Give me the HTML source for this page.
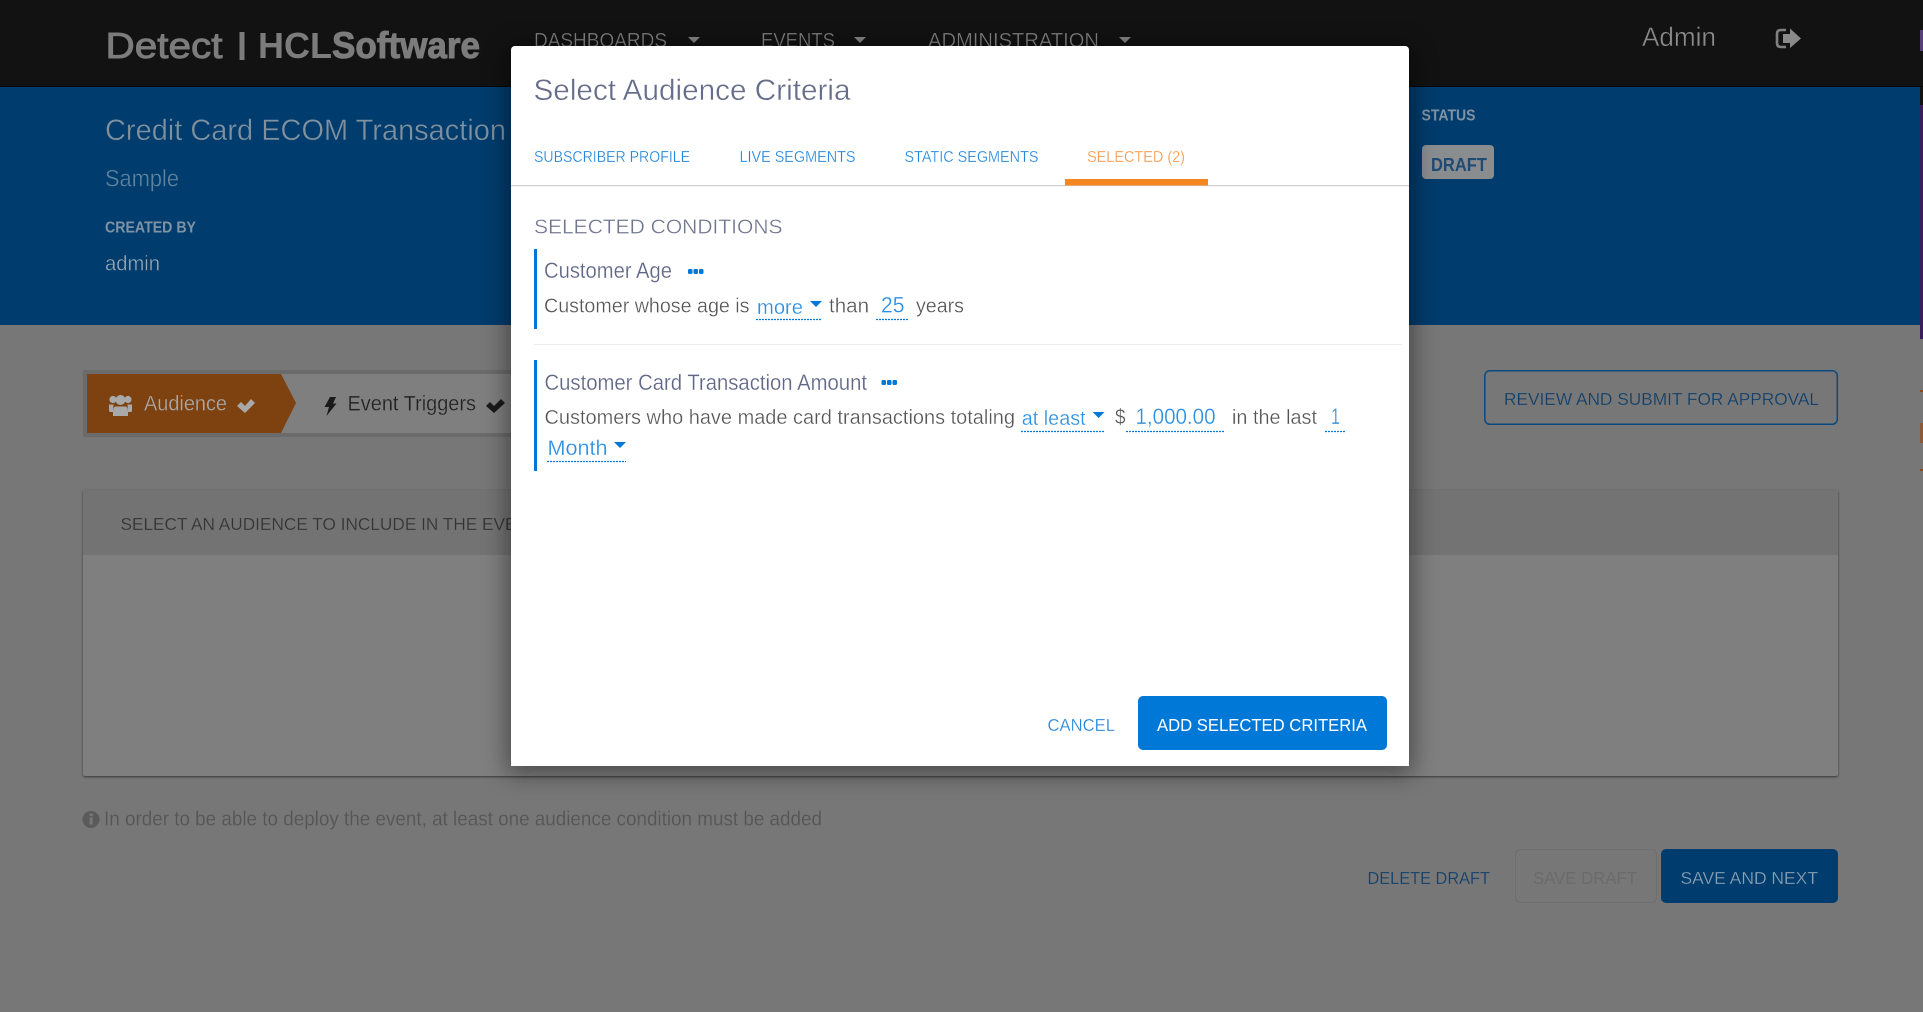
<!DOCTYPE html>
<html lang="en">
<head>
<meta charset="utf-8">
<title>Select Audience Criteria</title>
<style>
html,body{margin:0;padding:0;width:1923px;height:1012px;overflow:hidden;background:#777;font-family:"Liberation Sans",sans-serif}
.a{position:absolute}
svg{position:absolute;left:0;top:0;display:block;overflow:hidden}
svg text{font-family:"Liberation Sans",sans-serif}
#modal{left:511px;top:46px;width:898px;height:720px;background:#fff;border-radius:4px 4px 0 0;box-shadow:0 4px 24px 4px rgba(0,0,0,.42);overflow:hidden}
</style>
</head>
<body>
<div class="a" style="left:0;top:0;width:1923px;height:86px;background:#121212"></div>
<div class="a" style="left:0;top:86px;width:1923px;height:1px;background:#070707"></div>
<div class="a" style="left:0;top:87px;width:1920px;height:238px;background:#003c6d"></div>
<div class="a" style="left:83px;top:490px;width:1755px;height:286px;background:#7f7f7f;border-radius:2px;box-shadow:0 1px 2px rgba(0,0,0,.55)"></div>
<div class="a" style="left:83px;top:490px;width:1755px;height:65px;background:#737373;border-radius:2px 2px 0 0"></div>
<div class="a" style="left:83px;top:370px;width:440px;height:67px;background:#6b6b6b"></div>
<div class="a" style="left:87px;top:374px;width:430px;height:59px;background:#7f7f7f"></div>
<div class="a" style="left:1920px;top:87px;width:3px;height:18px;background:#121212"></div>
<div class="a" style="left:1920px;top:105px;width:3px;height:234px;background:#3a1e5c"></div>
<div class="a" style="left:1920px;top:30px;width:3px;height:21px;background:#57407a"></div>
<div class="a" style="left:1920px;top:390px;width:3px;height:2px;background:#8a4a20"></div>
<div class="a" style="left:1920px;top:423px;width:3px;height:20px;background:#8a5a3a"></div>
<div class="a" style="left:1920px;top:469px;width:3px;height:2px;background:#8a4a20"></div>

<svg width="1923" height="1012" viewBox="0 0 1923 1012">
  <!-- nav -->
  <g fill="#7c7c7c">
    <text x="105.5" y="58" font-size="36" stroke="#7c7c7c" stroke-width=".9" textLength="117" lengthAdjust="spacingAndGlyphs">Detect</text>
    <rect x="239.5" y="32" width="5" height="28"/>
    <text x="258" y="58" font-size="36" font-weight="700" textLength="74" lengthAdjust="spacingAndGlyphs">HCL</text>
    <text x="332" y="58" font-size="37" font-weight="700" stroke="#7c7c7c" stroke-width="1" textLength="148" lengthAdjust="spacingAndGlyphs">Software</text>
  </g>
  <g fill="#858585" font-size="20.5" stroke="#121212" stroke-width=".35">
    <text x="534" y="47" textLength="133" lengthAdjust="spacingAndGlyphs">DASHBOARDS</text>
    <polygon points="688,37 700,37 694,43" stroke="none"/>
    <text x="761" y="47" textLength="74" lengthAdjust="spacingAndGlyphs">EVENTS</text>
    <polygon points="854,37 866,37 860,43" stroke="none"/>
    <text x="928" y="47" textLength="171" lengthAdjust="spacingAndGlyphs">ADMINISTRATION</text>
    <polygon points="1119,37 1131,37 1125,43" stroke="none"/>
  </g>
  <text x="1642" y="46" font-size="27" fill="#8a8a8a" stroke="#121212" stroke-width=".4" textLength="74" lengthAdjust="spacingAndGlyphs">Admin</text>
  <path d="M1786 30H1781Q1777 30 1777 34V43Q1777 47 1781 47H1786" fill="none" stroke="#808080" stroke-width="2.6"/>
  <path d="M1783 34H1790V28.5L1801 38.5L1790 48V43H1783Z" fill="#8a8a8a"/>

  <!-- header -->
  <g stroke="#003c6d" stroke-width=".4">
    <text x="105" y="140" font-size="30" fill="#7f909e" textLength="401" lengthAdjust="spacingAndGlyphs">Credit Card ECOM Transaction</text>
    <text x="105" y="186.5" font-size="24.5" fill="#5f84a0" textLength="74" lengthAdjust="spacingAndGlyphs">Sample</text>
    <text x="105" y="270.5" font-size="21.5" fill="#9aa9b5" textLength="55" lengthAdjust="spacingAndGlyphs">admin</text>
  </g>
  <text x="105" y="232.5" font-size="16" font-weight="700" fill="#7f93a4" textLength="91" lengthAdjust="spacingAndGlyphs">CREATED BY</text>
  <text x="1421.5" y="120.5" font-size="16" font-weight="700" fill="#7f93a4" textLength="54" lengthAdjust="spacingAndGlyphs">STATUS</text>
  <rect x="1422" y="145" width="72" height="34" rx="4" fill="#8a8d90"/>
  <text x="1431" y="171" font-size="18" font-weight="700" fill="#1f4a73" textLength="56" lengthAdjust="spacingAndGlyphs">DRAFT</text>

  <!-- steps -->
  <polygon points="87,374 281,374 296,403 281,433 87,433" fill="#7d4210"/>
  <g fill="#a9a9a9">
    <circle cx="113" cy="399.5" r="3.6"/><circle cx="128" cy="399.5" r="3.6"/><circle cx="120.5" cy="400" r="5"/>
    <path d="M109 404.5H113.5L113 412H110Q109 412 109 410Z"/><path d="M127.5 404.5H132V410Q132 412 131 412H128Z"/>
    <path d="M115 406.5H126Q128 408 128 412V416H113V412Q113 408 115 406.5Z"/>
    <text x="144" y="410.5" font-size="21.5" stroke="#7d4210" stroke-width=".3" textLength="83" lengthAdjust="spacingAndGlyphs">Audience</text>
    <path d="M237 406L241 402L245 406L251 399L255 403L245 413Z"/>
  </g>
  <path d="M330 397H336L333 403.5H336.5L326.5 416L329 407H324.5Z" fill="#1a1a1a"/>
  <text x="347.5" y="410.5" font-size="21.5" fill="#222" stroke="#7f7f7f" stroke-width=".3" textLength="128.5" lengthAdjust="spacingAndGlyphs">Event Triggers</text>
  <path d="M486 406L490 402L494 406L501 399L505 403L494 413Z" fill="#1a1a1a"/>

  <!-- review button -->
  <rect x="1484.8" y="370.8" width="352.5" height="53.5" rx="5" fill="none" stroke="#0b4a80" stroke-width="1.5"/>
  <text x="1504" y="405" font-size="17.5" fill="#0f3f6b" stroke="#777" stroke-width=".25" textLength="315" lengthAdjust="spacingAndGlyphs">REVIEW AND SUBMIT FOR APPROVAL</text>

  <!-- card -->
  <text x="120.5" y="530" font-size="17.5" fill="#333" stroke="#737373" stroke-width=".25" textLength="396" lengthAdjust="spacingAndGlyphs">SELECT AN AUDIENCE TO INCLUDE IN THE EVE</text>

  <!-- info line -->
  <circle cx="91" cy="819.5" r="8.5" fill="#5a5a5a"/>
  <rect x="89.5" y="817.5" width="3.2" height="7" fill="#777"/><rect x="89.5" y="813.5" width="3.2" height="2.6" fill="#777"/>
  <text x="104" y="825.5" font-size="20.5" fill="#555" stroke="#777" stroke-width=".2" textLength="718" lengthAdjust="spacingAndGlyphs">In order to be able to deploy the event, at least one audience condition must be added</text>

  <!-- bottom buttons -->
  <text x="1367.5" y="884" font-size="17.5" fill="#0f3f6b" stroke="#777" stroke-width=".25" textLength="122.5" lengthAdjust="spacingAndGlyphs">DELETE DRAFT</text>
  <rect x="1515.5" y="849.5" width="141" height="53" rx="5" fill="none" stroke="#6e6e6e"/>
  <text x="1533" y="884" font-size="17.5" fill="#6b6b6b" textLength="104" lengthAdjust="spacingAndGlyphs">SAVE DRAFT</text>
  <rect x="1661" y="849" width="177" height="54" rx="5" fill="#003c6d"/>
  <text x="1680.5" y="884" font-size="17.5" fill="#8ba0b2" stroke="#003c6d" stroke-width=".25" textLength="137.5" lengthAdjust="spacingAndGlyphs">SAVE AND NEXT</text>
</svg>

<div class="a" id="modal">
<svg width="898" height="720" viewBox="511 46 898 720">
  <text x="533.5" y="100" font-size="30" fill="#666d8b" stroke="#fff" stroke-width=".4" textLength="317" lengthAdjust="spacingAndGlyphs">Select Audience Criteria</text>

  <g font-size="15.5" fill="#1f84db" stroke="#fff" stroke-width=".25">
    <text x="534" y="162" textLength="156" lengthAdjust="spacingAndGlyphs">SUBSCRIBER PROFILE</text>
    <text x="739.5" y="162" textLength="116" lengthAdjust="spacingAndGlyphs">LIVE SEGMENTS</text>
    <text x="904.5" y="162" textLength="134" lengthAdjust="spacingAndGlyphs">STATIC SEGMENTS</text>
  </g>
  <text x="1087" y="162" font-size="15.5" fill="#f79a4a" stroke="#fff" stroke-width=".2" textLength="98" lengthAdjust="spacingAndGlyphs">SELECTED (2)</text>
  <rect x="511" y="185" width="898" height="1.2" fill="#cfcfcf"/>
  <rect x="1065" y="179" width="143" height="6.5" fill="#f58720"/>

  <text x="534" y="233.5" font-size="20.5" fill="#70758f" stroke="#fff" stroke-width=".35" textLength="248.5" lengthAdjust="spacingAndGlyphs">SELECTED CONDITIONS</text>

  <!-- condition 1 -->
  <rect x="534" y="249" width="3" height="80" fill="#0078d7"/>
  <text x="544" y="278" font-size="22" fill="#5f6686" stroke="#fff" stroke-width=".25" textLength="128" lengthAdjust="spacingAndGlyphs">Customer Age</text>
  <g fill="#0078d7"><rect x="688" y="269" width="4.5" height="5" rx="1.2"/><rect x="693.5" y="269" width="4.5" height="5" rx="1.2"/><rect x="699" y="269" width="4.5" height="5" rx="1.2"/></g>
  <g font-size="20.5" fill="#555" stroke="#fff" stroke-width=".3">
    <text x="544" y="312.5" textLength="205.5" lengthAdjust="spacingAndGlyphs">Customer whose age is</text>
    <text x="829" y="312.5" textLength="40" lengthAdjust="spacingAndGlyphs">than</text>
    <text x="916" y="312.5" textLength="48" lengthAdjust="spacingAndGlyphs">years</text>
  </g>
  <g font-size="20.5" fill="#2a8fe2" stroke="#fff" stroke-width=".25">
    <text x="757" y="314" textLength="46" lengthAdjust="spacingAndGlyphs">more</text>
    <text x="881" y="312.5" font-size="22" textLength="23.5" lengthAdjust="spacingAndGlyphs">25</text>
  </g>
  <polygon points="810,301 822,301 816,307" fill="#0078d7"/>
  <g stroke="#0078d7" stroke-width="1.2" stroke-dasharray="2 1" fill="none">
    <path d="M756 319.5H822"/><path d="M876 319.5H909"/>
  </g>

  <rect x="534" y="344" width="868" height="1" fill="#ececec"/>

  <!-- condition 2 -->
  <rect x="534" y="360" width="3" height="111" fill="#0078d7"/>
  <text x="544.5" y="390" font-size="22" fill="#5f6686" stroke="#fff" stroke-width=".25" textLength="322.5" lengthAdjust="spacingAndGlyphs">Customer Card Transaction Amount</text>
  <g fill="#0078d7"><rect x="881.5" y="380" width="4.5" height="5" rx="1.2"/><rect x="887" y="380" width="4.5" height="5" rx="1.2"/><rect x="892.5" y="380" width="4.5" height="5" rx="1.2"/></g>
  <g font-size="20.5" fill="#555" stroke="#fff" stroke-width=".3">
    <text x="544.5" y="424" textLength="470.5" lengthAdjust="spacingAndGlyphs">Customers who have made card transactions totaling</text>
    <text x="1115" y="424" font-size="21" textLength="10.5" lengthAdjust="spacingAndGlyphs">$</text>
    <text x="1232" y="424" textLength="85" lengthAdjust="spacingAndGlyphs">in the last</text>
  </g>
  <g font-size="20.5" fill="#2a8fe2" stroke="#fff" stroke-width=".25">
    <text x="1021.7" y="425" textLength="64" lengthAdjust="spacingAndGlyphs">at least</text>
    <text x="1135.5" y="424" font-size="22" textLength="80" lengthAdjust="spacingAndGlyphs">1,000.00</text>
    <text x="1331" y="424" font-size="22" textLength="9" lengthAdjust="spacingAndGlyphs">1</text>
    <text x="547.5" y="455" font-size="21.5" textLength="60" lengthAdjust="spacingAndGlyphs">Month</text>
  </g>
  <polygon points="1092.7,412 1104.5,412 1098.6,418" fill="#0078d7"/>
  <polygon points="614,442 626,442 620,448" fill="#0078d7"/>
  <g stroke="#0078d7" stroke-width="1.2" stroke-dasharray="2 1" fill="none">
    <path d="M1021 431.5H1104.5"/><path d="M1126 431.5H1225"/><path d="M1325 431.5H1346"/><path d="M547 461.5H626"/>
  </g>

  <!-- footer -->
  <text x="1047.5" y="731" font-size="17.5" fill="#1f84db" stroke="#fff" stroke-width=".25" textLength="67.5" lengthAdjust="spacingAndGlyphs">CANCEL</text>
  <rect x="1138" y="696" width="249" height="54" rx="5" fill="#0078d7"/>
  <text x="1157" y="731" font-size="17.5" fill="#fff" textLength="210" lengthAdjust="spacingAndGlyphs">ADD SELECTED CRITERIA</text>
</svg>
</div>
</body>
</html>
